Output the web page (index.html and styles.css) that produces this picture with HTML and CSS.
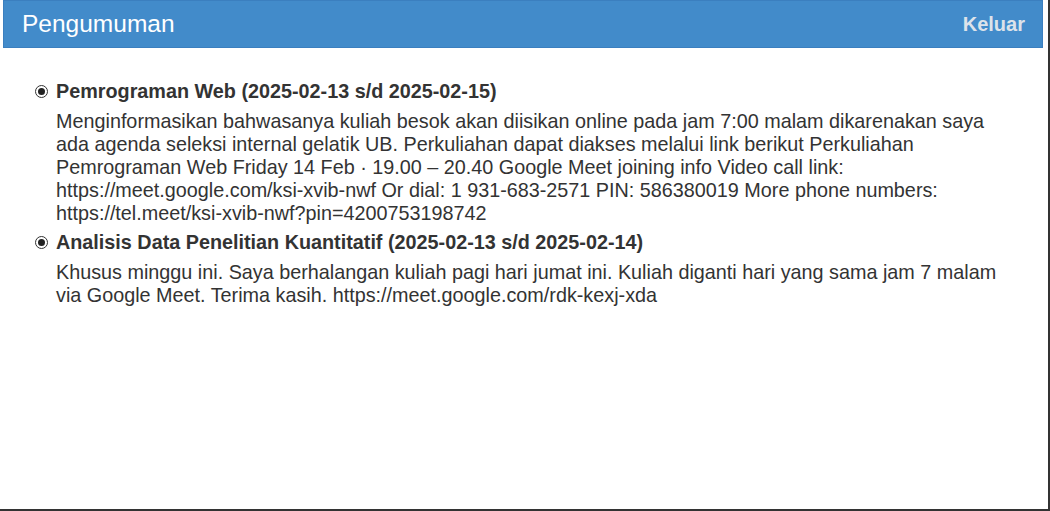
FILE: index.html
```html
<!DOCTYPE html>
<html>
<head>
<meta charset="utf-8">
<link rel="stylesheet" href="styles.css">
</head>
<body>
<div class="window">
  <div class="header">
    <span class="title">Pengumuman</span>
    <a class="logout">Keluar</a>
  </div>
  <ul class="list">
    <li class="item">
      <div class="item-title"><span class="radio"></span>Pemrograman Web (2025-02-13 s/d 2025-02-15)</div>
      <div class="item-body">Menginformasikan bahwasanya kuliah besok akan diisikan online pada jam 7:00 malam dikarenakan saya ada agenda seleksi internal gelatik UB. Perkuliahan dapat diakses melalui link berikut Perkuliahan Pemrograman Web Friday 14 Feb · 19.00 – 20.40 Google Meet joining info Video call link: https://meet.google.com/ksi-xvib-nwf Or dial: 1 931-683-2571 PIN: 586380019 More phone numbers: https://tel.meet/ksi-xvib-nwf?pin=4200753198742</div>
    </li>
    <li class="item">
      <div class="item-title"><span class="radio"></span>Analisis Data Penelitian Kuantitatif (2025-02-13 s/d 2025-02-14)</div>
      <div class="item-body">Khusus minggu ini. Saya berhalangan kuliah pagi hari jumat ini. Kuliah diganti hari yang sama jam 7 malam via Google Meet. Terima kasih. https://meet.google.com/rdk-kexj-xda</div>
    </li>
  </ul>
</div>
</body>
</html>
```
FILE: styles.css
```css
html, body {
  margin: 0;
  padding: 0;
  background: #fff;
}
.window {
  box-sizing: border-box;
  width: 1050px;
  height: 511px;
  border-right: 2px solid #333;
  border-bottom: 2px solid #333;
  padding-left: 3px;
  font-family: "Liberation Sans", Arial, sans-serif;
  color: #333;
}
.header {
  box-sizing: border-box;
  width: 1040px;
  height: 48px;
  background: #428bca;
  border: 1px solid #3b7fbf;
  display: flex;
  align-items: center;
  justify-content: space-between;
  padding: 0 17px 0 18px;
}
.title {
  color: #fff;
  font-size: 24.5px;
}
.logout {
  color: #dde3ea;
  font-weight: bold;
  font-size: 20px;
}
.list {
  list-style: none;
  margin: 0;
  padding: 32px 0 0 32px;
}
.item {
  margin-bottom: 6px;
}
.item-title {
  font-weight: bold;
  font-size: 19.8px;
  line-height: 23px;
  display: flex;
  align-items: center;
}
.radio {
  box-sizing: border-box;
  width: 13px;
  height: 13px;
  border: 1.5px solid #333;
  border-radius: 50%;
  margin-right: 8px;
  position: relative;
  flex: none;
}
.radio::after {
  content: "";
  position: absolute;
  left: 1.5px;
  top: 1.5px;
  width: 7px;
  height: 7px;
  border-radius: 50%;
  background: #222;
}
.item-body {
  font-size: 19.8px;
  line-height: 23px;
  padding: 7px 30px 0 21px;
}
```
